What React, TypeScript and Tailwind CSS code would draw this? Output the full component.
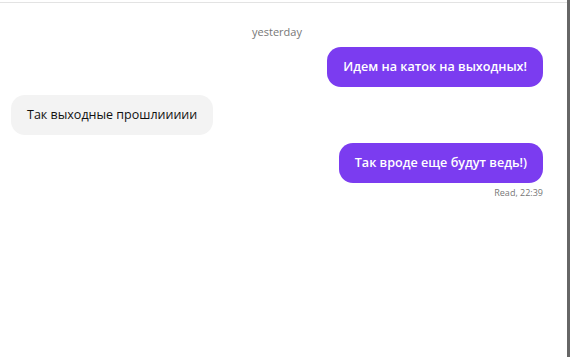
export default function App() {
  return (
    <div
      className="flex h-[357px] w-[570px] bg-white"
      style={{ fontFamily: '"Open Sans", "Noto Sans", sans-serif' }}
    >
      <div className="flex flex-1 flex-col border-t border-[#e3e3e3] mt-[2px] pl-[11px] pr-[24px]">
        <p className="mt-[21px] text-center text-[11px] leading-[16px] text-[#777]">
          yesterday
        </p>
        <div className="mt-[7px] flex flex-col gap-[8px]">
          <div className="flex justify-end">
            <div className="rounded-[14px] bg-[#7b3cf0] px-[16px] py-[10px] text-[12.6px] leading-[20px] font-semibold text-white">
              Идем на каток на выходных!
            </div>
          </div>
          <div className="flex justify-start">
            <div className="rounded-[14px] bg-[#f3f3f3] px-[16px] py-[10px] text-[12.5px] leading-[20px] text-[#111]">
              Так выходные прошлиииии
            </div>
          </div>
          <div className="flex flex-col items-end">
            <div className="rounded-[14px] bg-[#7b3cf0] px-[16px] py-[10px] text-[12.6px] leading-[20px] font-semibold text-white">
              Так вроде еще будут ведь!)
            </div>
            <p className="mt-[4px] text-[9px] leading-[12px] text-[#777]">Read, 22:39</p>
          </div>
        </div>
      </div>
      <div className="w-[3px] bg-[#666]" />
    </div>
  );
}
